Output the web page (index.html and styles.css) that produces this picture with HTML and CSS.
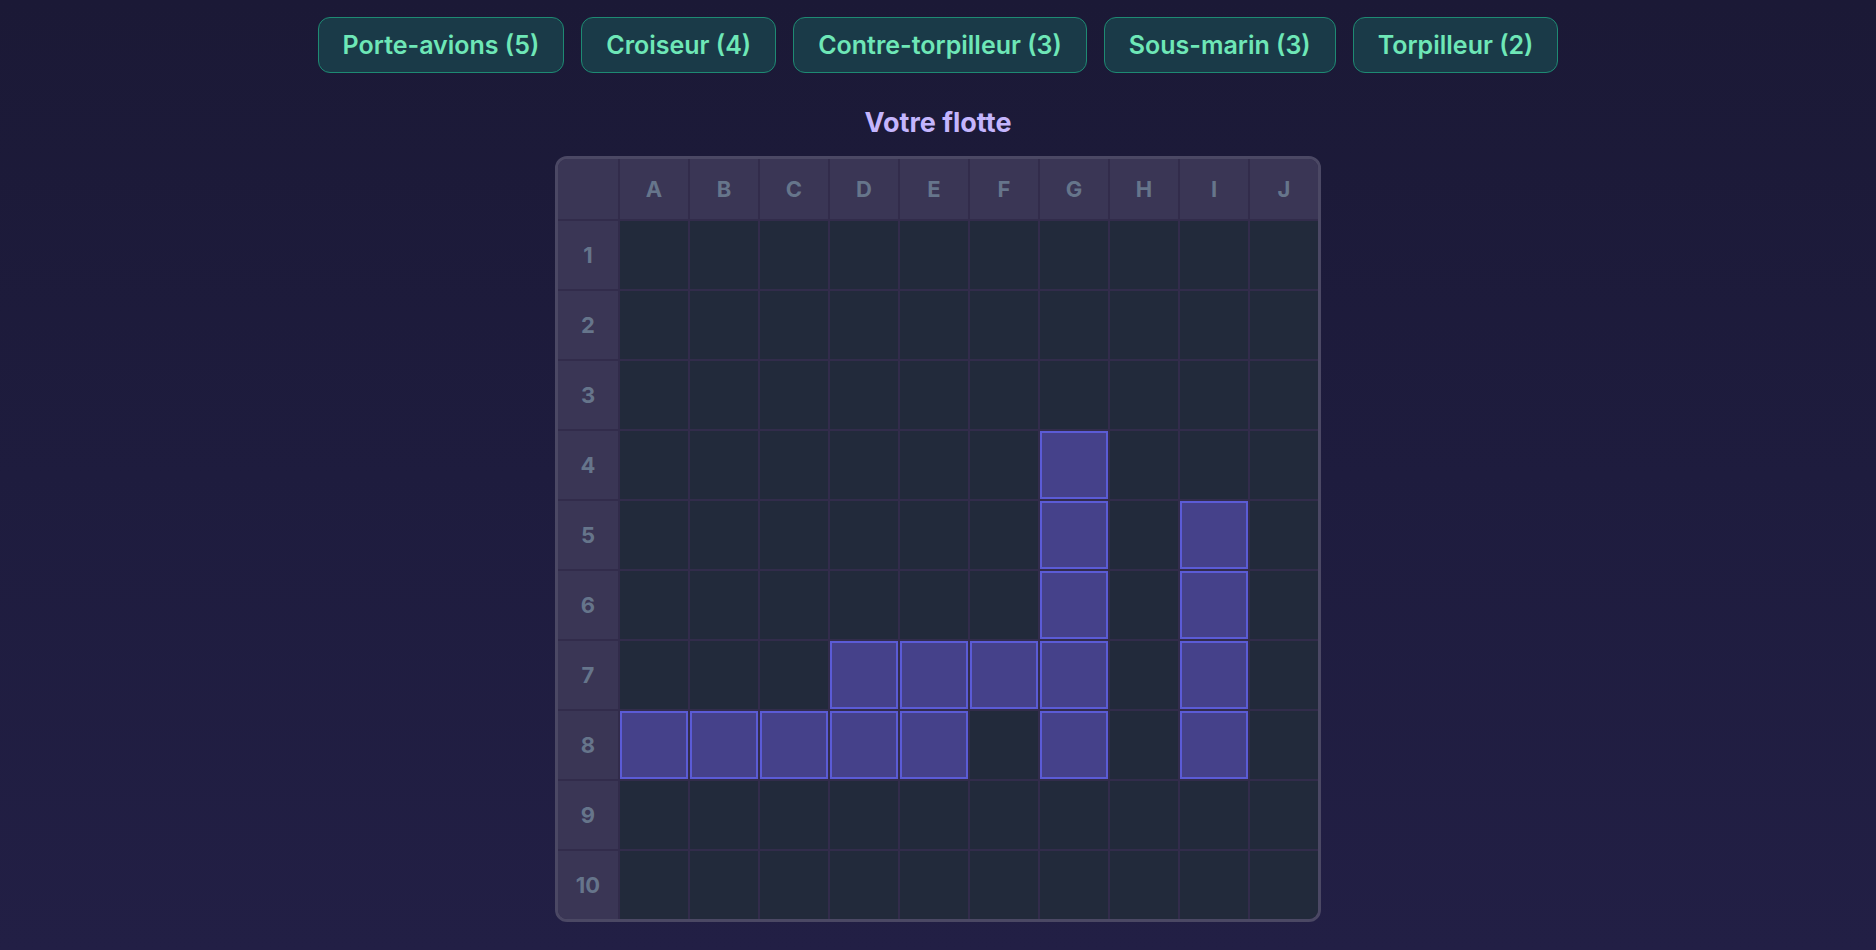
FILE: index.html
```html
<!DOCTYPE html>
<html lang="fr">
<head>
    <meta charset="UTF-8">
    <meta name="viewport" content="width=device-width, initial-scale=1.0">
    <title>Bataille navale</title>
    <link rel="stylesheet" href="styles.css">
</head>
<body>
    <nav class="fleet">
        <button class="ship-btn">Porte-avions (5)</button>
        <button class="ship-btn">Croiseur (4)</button>
        <button class="ship-btn">Contre-torpilleur (3)</button>
        <button class="ship-btn">Sous-marin (3)</button>
        <button class="ship-btn">Torpilleur (2)</button>
    </nav>
    <main>
        <h2 class="board-title">Votre flotte</h2>
        <div class="board" id="board"></div>
    </main>
    <script>
        const COLS = ['A', 'B', 'C', 'D', 'E', 'F', 'G', 'H', 'I', 'J'];
        // cases occupées par les navires
        const SHIPS = ['G4', 'G5', 'G6', 'G7', 'G8', 'I5', 'I6', 'I7', 'I8',
                       'D7', 'E7', 'F7', 'A8', 'B8', 'C8', 'D8', 'E8'];

        const board = document.getElementById('board');

        function addCell(cls, text) {
            const el = document.createElement('div');
            el.className = cls;
            if (text) el.textContent = text;
            board.appendChild(el);
        }

        addCell('label corner');
        COLS.forEach(c => addCell('label', c));
        for (let row = 1; row <= 10; row++) {
            addCell('label', String(row));
            COLS.forEach(c => {
                addCell(SHIPS.includes(c + row) ? 'cell ship' : 'cell');
            });
        }
    </script>
</body>
</html>
```
FILE: styles.css
```css
body {
    margin: 0;
    padding: 17px 0 0;
    min-height: 950px;
    box-sizing: border-box;
    font-family: Inter, "Noto Sans", sans-serif;
    background: linear-gradient(180deg, #1b1936 0%, #1e1c3e 50%, #221f45 100%);
    display: flex;
    flex-direction: column;
    align-items: center;
}
.fleet {
    display: flex;
    gap: 17px;
}
.ship-btn {
    font-family: inherit;
    font-size: 25px;
    font-weight: 600;
    line-height: 30px;
    color: #6ee7b7;
    background: #1a3a48;
    border: 1px solid #1e8a73;
    border-radius: 12px;
    padding: 12px 24px;
    cursor: pointer;
}
main {
    display: flex;
    flex-direction: column;
    align-items: center;
}
.board-title {
    margin: 34px 0 17px;
    font-size: 27px;
    line-height: 32px;
    font-weight: 700;
    color: #c4b5fd;
}
.board {
    display: grid;
    grid-template-columns: 60px repeat(10, 68px);
    grid-template-rows: 60px repeat(10, 68px);
    gap: 2px;
    background: #322c4b;
    border: 3px solid #4b4864;
    border-radius: 12px;
    overflow: hidden;
}
.label {
    background: #3a3655;
    color: #66758b;
    font-size: 22px;
    font-weight: 700;
    display: flex;
    align-items: center;
    justify-content: center;
}
.cell {
    background: #222a3b;
}
.cell.ship {
    background: #45418a;
    border: 2px solid #5b5bd6;
}
```
